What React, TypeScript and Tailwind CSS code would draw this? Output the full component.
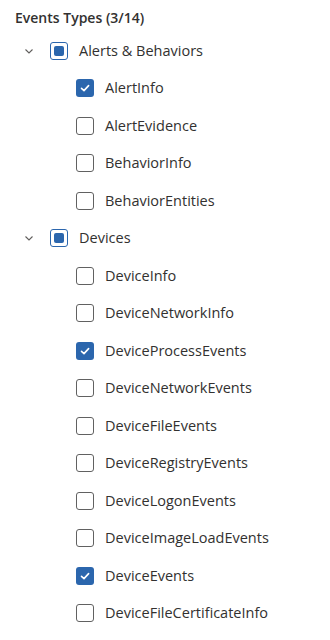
import React from 'react';

type Group = { name: string; items: { label: string; checked: boolean }[] };

const groups: Group[] = [
  {
    name: 'Alerts & Behaviors',
    items: [
      { label: 'AlertInfo', checked: true },
      { label: 'AlertEvidence', checked: false },
      { label: 'BehaviorInfo', checked: false },
      { label: 'BehaviorEntities', checked: false },
    ],
  },
  {
    name: 'Devices',
    items: [
      { label: 'DeviceInfo', checked: false },
      { label: 'DeviceNetworkInfo', checked: false },
      { label: 'DeviceProcessEvents', checked: true },
      { label: 'DeviceNetworkEvents', checked: false },
      { label: 'DeviceFileEvents', checked: false },
      { label: 'DeviceRegistryEvents', checked: false },
      { label: 'DeviceLogonEvents', checked: false },
      { label: 'DeviceImageLoadEvents', checked: false },
      { label: 'DeviceEvents', checked: true },
      { label: 'DeviceFileCertificateInfo', checked: false },
    ],
  },
];

function Box({ state }: { state: 'on' | 'off' | 'mixed' }) {
  if (state === 'on') {
    return (
      <span className="w-[18px] h-[18px] rounded-[3px] bg-[#2b66ad] flex items-center justify-center shrink-0">
        <svg width="12" height="12" viewBox="0 0 12 12" fill="none">
          <path d="M2.5 6.3 L5 8.6 L9.6 3.6" stroke="white" strokeWidth="1.6" strokeLinecap="round" strokeLinejoin="round" />
        </svg>
      </span>
    );
  }
  if (state === 'mixed') {
    return (
      <span className="w-[18px] h-[18px] rounded-[3px] border border-[#2b66ad] flex items-center justify-center shrink-0">
        <span className="w-[10px] h-[10px] rounded-[2px] bg-[#2b66ad]" />
      </span>
    );
  }
  return <span className="w-[18px] h-[18px] rounded-[3px] border border-[#616161] shrink-0" />;
}

export default function App() {
  return (
    <div className="min-h-screen bg-white text-[#323130] text-[14.5px] font-['Open_Sans',sans-serif]">
      <div className="pt-[8px] px-[15px] text-[14px] font-semibold leading-[20px]">Events Types (3/14)</div>
      <div className="pt-[4px]">
        {groups.map((g) => (
          <div key={g.name}>
            <div className="h-[37.5px] flex items-center">
              <svg className="ml-[24px] shrink-0" width="10" height="10" viewBox="0 0 10 10" fill="none">
                <path d="M1.5 3.5 L5 7 L8.5 3.5" stroke="#605e5c" strokeWidth="1.1" />
              </svg>
              <span className="ml-[16px]"><Box state="mixed" /></span>
              <span className="ml-[11px]">{g.name}</span>
            </div>
            {g.items.map((it) => (
              <div key={it.label} className="h-[37.5px] flex items-center pl-[76px]">
                <Box state={it.checked ? 'on' : 'off'} />
                <span className="ml-[11px]">{it.label}</span>
              </div>
            ))}
          </div>
        ))}
      </div>
    </div>
  );
}
